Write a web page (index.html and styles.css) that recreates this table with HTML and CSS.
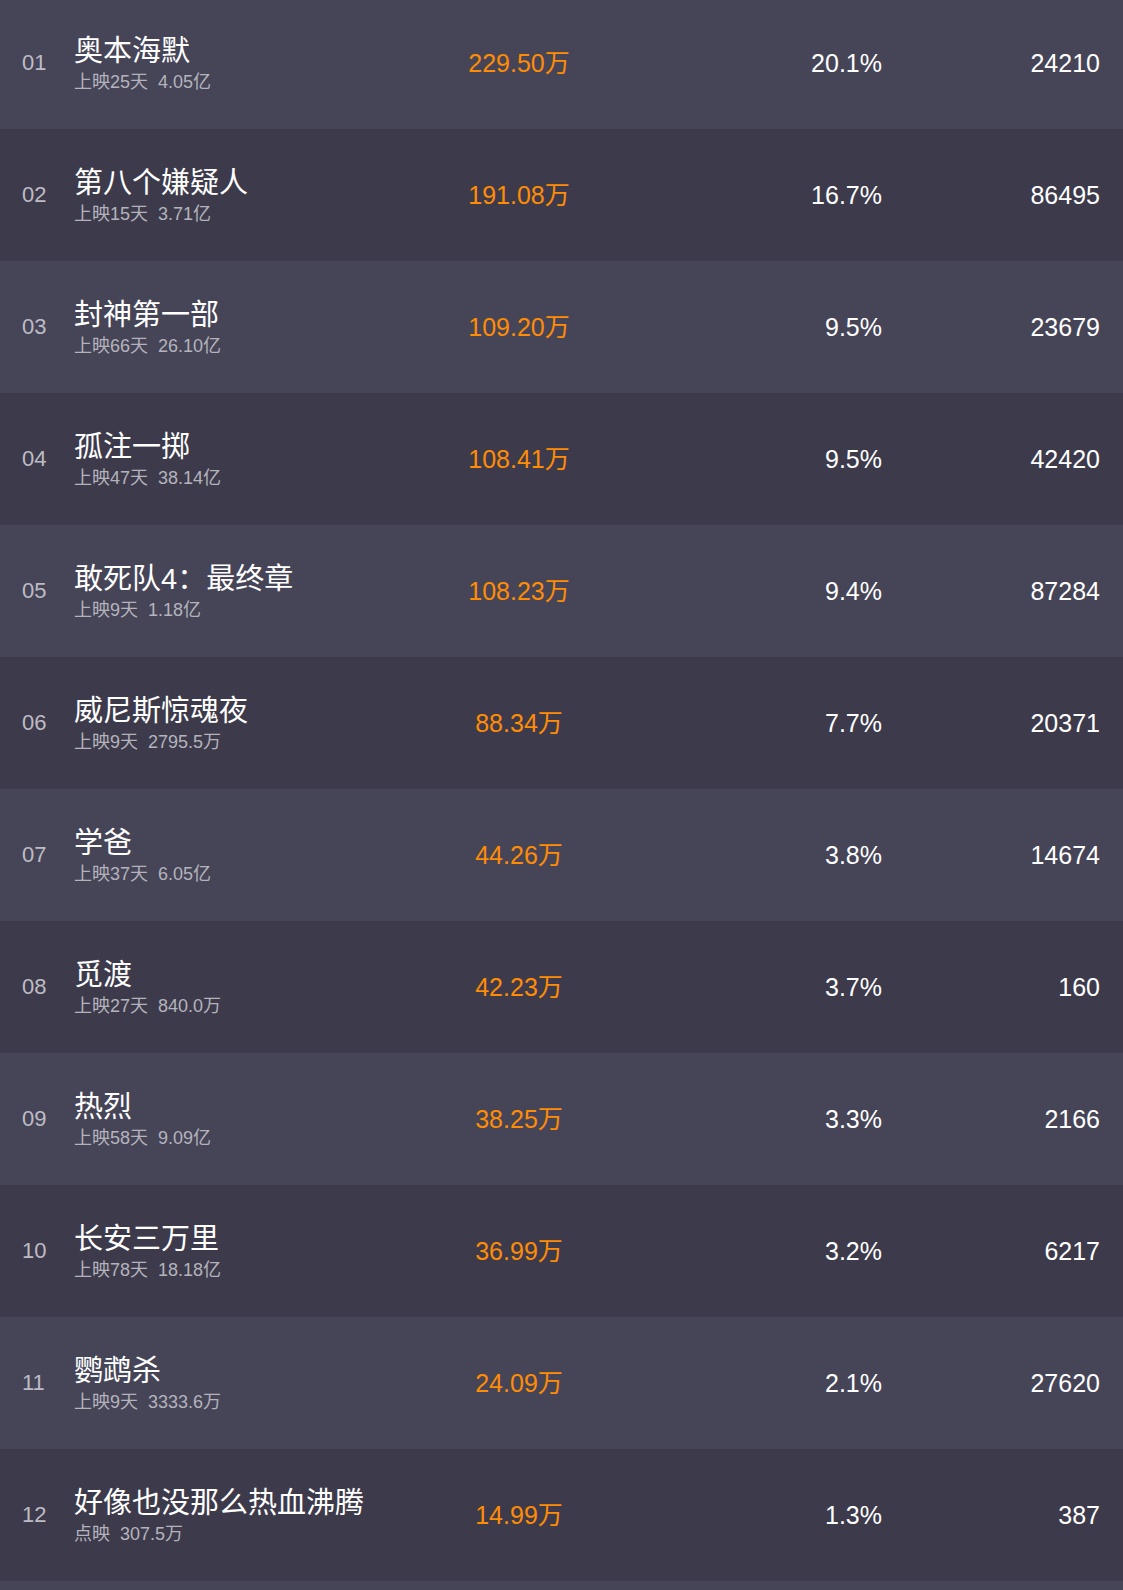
FILE: index.html
```html
<!DOCTYPE html>
<html lang="zh-CN">
<head>
    <meta charset="UTF-8">
    <meta name="viewport" content="width=device-width, initial-scale=1.0">
    <title>实时票房</title>
    <link rel="stylesheet" href="styles.css">
</head>
<body>
    <main class="board">
        <div class="row">
            <div class="rank">01</div>
            <div class="movie">
                <div class="name">奥本海默</div>
                <div class="info">上映25天<span class="sum">4.05亿</span></div>
            </div>
            <div class="box">229.50万</div>
            <div class="rate">20.1%</div>
            <div class="shows">24210</div>
        </div>
        <div class="row">
            <div class="rank">02</div>
            <div class="movie">
                <div class="name">第八个嫌疑人</div>
                <div class="info">上映15天<span class="sum">3.71亿</span></div>
            </div>
            <div class="box">191.08万</div>
            <div class="rate">16.7%</div>
            <div class="shows">86495</div>
        </div>
        <div class="row">
            <div class="rank">03</div>
            <div class="movie">
                <div class="name">封神第一部</div>
                <div class="info">上映66天<span class="sum">26.10亿</span></div>
            </div>
            <div class="box">109.20万</div>
            <div class="rate">9.5%</div>
            <div class="shows">23679</div>
        </div>
        <div class="row">
            <div class="rank">04</div>
            <div class="movie">
                <div class="name">孤注一掷</div>
                <div class="info">上映47天<span class="sum">38.14亿</span></div>
            </div>
            <div class="box">108.41万</div>
            <div class="rate">9.5%</div>
            <div class="shows">42420</div>
        </div>
        <div class="row">
            <div class="rank">05</div>
            <div class="movie">
                <div class="name">敢死队4：最终章</div>
                <div class="info">上映9天<span class="sum">1.18亿</span></div>
            </div>
            <div class="box">108.23万</div>
            <div class="rate">9.4%</div>
            <div class="shows">87284</div>
        </div>
        <div class="row">
            <div class="rank">06</div>
            <div class="movie">
                <div class="name">威尼斯惊魂夜</div>
                <div class="info">上映9天<span class="sum">2795.5万</span></div>
            </div>
            <div class="box">88.34万</div>
            <div class="rate">7.7%</div>
            <div class="shows">20371</div>
        </div>
        <div class="row">
            <div class="rank">07</div>
            <div class="movie">
                <div class="name">学爸</div>
                <div class="info">上映37天<span class="sum">6.05亿</span></div>
            </div>
            <div class="box">44.26万</div>
            <div class="rate">3.8%</div>
            <div class="shows">14674</div>
        </div>
        <div class="row">
            <div class="rank">08</div>
            <div class="movie">
                <div class="name">觅渡</div>
                <div class="info">上映27天<span class="sum">840.0万</span></div>
            </div>
            <div class="box">42.23万</div>
            <div class="rate">3.7%</div>
            <div class="shows">160</div>
        </div>
        <div class="row">
            <div class="rank">09</div>
            <div class="movie">
                <div class="name">热烈</div>
                <div class="info">上映58天<span class="sum">9.09亿</span></div>
            </div>
            <div class="box">38.25万</div>
            <div class="rate">3.3%</div>
            <div class="shows">2166</div>
        </div>
        <div class="row">
            <div class="rank">10</div>
            <div class="movie">
                <div class="name">长安三万里</div>
                <div class="info">上映78天<span class="sum">18.18亿</span></div>
            </div>
            <div class="box">36.99万</div>
            <div class="rate">3.2%</div>
            <div class="shows">6217</div>
        </div>
        <div class="row">
            <div class="rank">11</div>
            <div class="movie">
                <div class="name">鹦鹉杀</div>
                <div class="info">上映9天<span class="sum">3333.6万</span></div>
            </div>
            <div class="box">24.09万</div>
            <div class="rate">2.1%</div>
            <div class="shows">27620</div>
        </div>
        <div class="row">
            <div class="rank">12</div>
            <div class="movie">
                <div class="name">好像也没那么热血沸腾</div>
                <div class="info">点映<span class="sum">307.5万</span></div>
            </div>
            <div class="box">14.99万</div>
            <div class="rate">1.3%</div>
            <div class="shows">387</div>
        </div>
    </main>
</body>
</html>
```

FILE: styles.css
```css
body {
    margin: 0;
    background-color: #464557;
    color: #fff;
    font-family: "Liberation Sans", "Noto Sans CJK SC", sans-serif;
}

/* the list is scrolled a few pixels */
.board {
    margin-top: -3px;
}

.row {
    display: grid;
    grid-template-columns: 52px 345px 200px 263px 1fr;
    align-items: center;
    height: 132px;
    padding: 0 23px 0 22px;
    background-color: #464557;
}
.row:nth-child(even) {
    background-color: #3d3b4b;
}

.rank {
    font-size: 22px;
    line-height: 26px;
    color: #bdbcc5;
}

.movie {
    display: flex;
    flex-direction: column;
    gap: 3px;
    padding-top: 1px;
}
.name {
    font-size: 29px;
    line-height: 34px;
    white-space: nowrap;
}
.info {
    font-size: 18px;
    line-height: 22px;
    color: #b4b3bd;
}
.info .sum {
    margin-left: 10px;
}

.box,
.rate,
.shows {
    font-size: 25px;
    line-height: 29px;
}
.box {
    color: #ff8c05;
    text-align: center;
}
.rate,
.shows {
    text-align: right;
}
```
